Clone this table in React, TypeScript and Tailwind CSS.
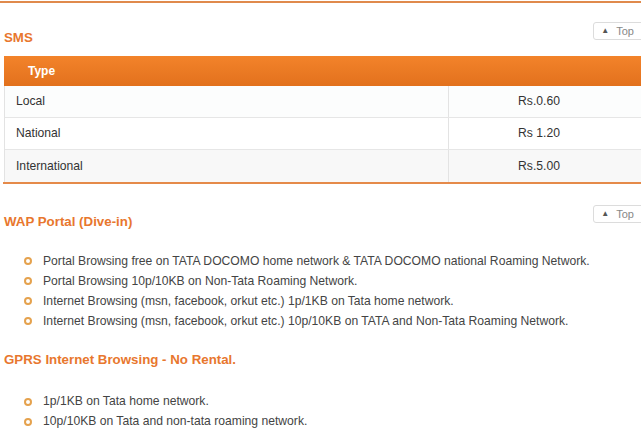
import React from 'react';

const rows = [
    { type: 'Local', price: 'Rs.0.60', bg: 'bg-[#fcfdfd]' },
    { type: 'National', price: 'Rs 1.20', bg: 'bg-white' },
    { type: 'International', price: 'Rs.5.00', bg: 'bg-[#f8f8f8]' },
];

const wapItems = [
    'Portal Browsing free on TATA DOCOMO home network & TATA DOCOMO national Roaming Network.',
    'Portal Browsing 10p/10KB on Non-Tata Roaming Network.',
    'Internet Browsing (msn, facebook, orkut etc.) 1p/1KB on Tata home network.',
    'Internet Browsing (msn, facebook, orkut etc.) 10p/10KB on TATA and Non-Tata Roaming Network.',
];

const gprsItems = ['1p/1KB on Tata home network.', '10p/10KB on Tata and non-tata roaming network.'];

function TopButton() {
    return (
        <button className="flex items-center gap-[7px] h-[18px] pl-[7px] pr-[10px] mr-[-4px] rounded-[3px] border border-[#dcdcdc] bg-white text-[11px] leading-none text-[#888]">
            <span className="text-[8px] text-[#555]">▲</span>
            Top
        </button>
    );
}

function Bullets({ items }: { items: string[] }) {
    return (
        <ul className="pl-[24px] flex flex-col">
            {items.map((item) => (
                <li key={item} className="flex items-center h-[20px] gap-[11px]">
                    <span className="w-[8px] h-[8px] rounded-full border-2 border-[#e5a24e] shrink-0" />
                    <span>{item}</span>
                </li>
            ))}
        </ul>
    );
}

export default function App() {
    return (
        <div className="w-[641px] h-[440px] overflow-hidden bg-white text-[12.15px] text-[#444] font-['Liberation_Sans',Arial,sans-serif]">
            <div className="h-[2px] bg-[#e08a4c] mt-[1px]" />

            {/* SMS */}
            <div className="flex items-end justify-between pl-[4px] mt-[19px]">
                <h2 className="text-[13.3px] font-bold text-[#e8772e] leading-none mb-[-4px]">SMS</h2>
                <TopButton />
            </div>

            <div className="ml-[4px] mt-[16px]">
                <div className="h-[30px] flex items-center pl-[24px] bg-gradient-to-b from-[#f3832a] to-[#e2711d] text-white font-bold text-[12px]">
                    Type
                </div>
                <div className="border-l border-[#e3e3e3]">
                    {rows.map((r, i) => (
                        <div
                            key={r.type}
                            className={`flex h-[32px] items-center text-[#333] ${r.bg} ${i < rows.length - 1 ? 'border-b border-[#e6e6e6]' : ''}`}
                        >
                            <div className="w-[444px] pl-[11px] h-full flex items-center border-r border-[#e3e3e3]">{r.type}</div>
                            <div className="flex-1 text-center pr-[12px]">{r.price}</div>
                        </div>
                    ))}
                </div>
                <div className="h-[2px] bg-[#e58a4a] ml-[-1px]" />
            </div>

            {/* WAP */}
            <div className="flex items-start justify-between pl-[4px] mt-[21px]">
                <h2 className="text-[13.3px] font-bold text-[#e8772e] leading-none mt-[10px]">WAP Portal (Dive-in)</h2>
                <TopButton />
            </div>

            <div className="mt-[23px]">
                <Bullets items={wapItems} />
            </div>

            <h2 className="pl-[4px] mt-[22px] text-[13.3px] font-bold text-[#e8772e] leading-none">GPRS Internet Browsing - No Rental.</h2>

            <div className="mt-[25px]">
                <Bullets items={gprsItems} />
            </div>
        </div>
    );
}
